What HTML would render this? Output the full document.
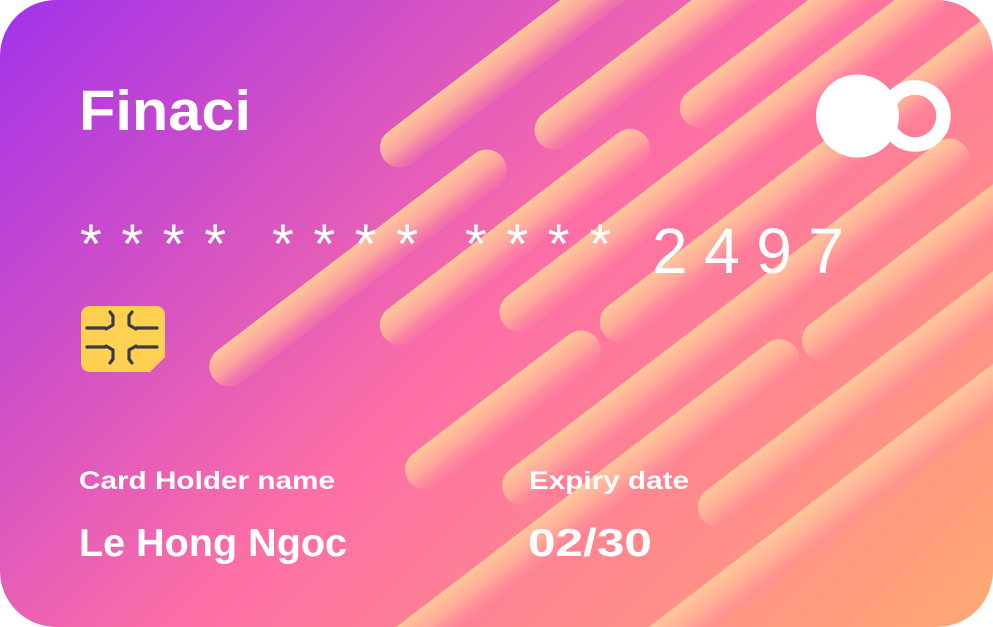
<!DOCTYPE html>
<html><head><meta charset="utf-8"><style>
html,body{margin:0;padding:0;background:#fff;width:993px;height:627px;overflow:hidden;}
svg{display:block;}
text{font-family:"Liberation Sans",sans-serif;fill:#fff;}
</style></head><body>
<svg width="993" height="627" viewBox="0 0 993 627" xmlns="http://www.w3.org/2000/svg">
<defs>
<linearGradient id="bg" x1="0" y1="0" x2="800" y2="800" gradientUnits="userSpaceOnUse">
<stop offset="0" stop-color="#a232ea"/>
<stop offset="0.28" stop-color="#d452c4"/>
<stop offset="0.5" stop-color="#fd6ea6"/>
<stop offset="0.75" stop-color="#ff8a8c"/>
<stop offset="1" stop-color="#ffa874"/>
</linearGradient>
<linearGradient id="pg" x1="0" y1="0" x2="0" y2="1">
<stop offset="0" stop-color="#ffc79a" stop-opacity="1"/>
<stop offset="0.5" stop-color="#ffb49a" stop-opacity="0.8"/>
<stop offset="1" stop-color="#ff86a0" stop-opacity="0.25"/>
</linearGradient>
<clipPath id="card"><rect x="0" y="0" width="993" height="627" rx="56"/></clipPath>
</defs>
<g clip-path="url(#card)">
<rect x="0" y="0" width="993" height="627" fill="url(#bg)"/>
<g fill="url(#pg)">
<rect x="349" y="36" width="342" height="40" rx="20" transform="rotate(-37.4 520 56)"/>
<rect x="505.5" y="24" width="323" height="40" rx="20" transform="rotate(-37.4 667 44)"/>
<rect x="656.5" y="19" width="267" height="40" rx="20" transform="rotate(-37.4 790 39)"/>
<rect x="447" y="137" width="550" height="40" rx="20" transform="rotate(-37.4 722 157)"/>
<rect x="176" y="248" width="364" height="40" rx="20" transform="rotate(-37.4 358 268)"/>
<rect x="350" y="217" width="330" height="40" rx="20" transform="rotate(-37.4 515 237)"/>
<rect x="548" y="149" width="544" height="40" rx="20" transform="rotate(-37.4 820 169)"/>
<rect x="447" y="302" width="578" height="40" rx="20" transform="rotate(-37.4 736 322)"/>
<rect x="385" y="390" width="236" height="40" rx="20" transform="rotate(-37.4 503 410)"/>
<rect x="331.5" y="484" width="517" height="40" rx="20" transform="rotate(-37.4 590 504)"/>
<rect x="653.5" y="356" width="471" height="40" rx="20" transform="rotate(-37.4 889 376)"/>
<rect x="771" y="229" width="340" height="40" rx="20" transform="rotate(-37.4 941 249)"/>
<rect x="517.5" y="486" width="645" height="42" rx="21" transform="rotate(-37.4 840 506)"/>
</g>
<circle cx="915" cy="116" r="28.5" fill="none" stroke="#fff" stroke-width="14.5"/>
<circle cx="857.5" cy="116" r="41.5" fill="#fff"/>
<text x="79" y="130" font-size="57" font-weight="bold" textLength="172" lengthAdjust="spacingAndGlyphs">Finaci</text>
<text x="80" y="263" font-size="56" textLength="146" lengthAdjust="spacing">****</text>
<text x="272" y="263" font-size="56" textLength="146" lengthAdjust="spacing">****</text>
<text x="465" y="263" font-size="56" textLength="146" lengthAdjust="spacing">****</text>
<text x="652" y="273" font-size="64" textLength="192" lengthAdjust="spacing">2497</text>
<path d="M91 306 H155 Q165 306 165 316 V357 L150 372 H91 Q81 372 81 362 V316 Q81 306 91 306 Z" fill="#ffd052"/>
<g fill="none" stroke="#3a3a48" stroke-width="3.2" stroke-linecap="round" stroke-linejoin="round">
<path d="M87 328 H105 M87 347 H105 M137 328 H157 M137 347 H157"/>
<path d="M110 312 L113 316 V325 L106 329 M106 346 L113 350 V359 L110 363"/>
<path d="M132 312 L129 316 V325 L136 329 M136 346 L129 350 V359 L132 363"/>
</g>
<text x="79" y="489" font-size="25" font-weight="bold" textLength="256" lengthAdjust="spacingAndGlyphs">Card Holder name</text>
<text x="79" y="556" font-size="39" font-weight="bold" textLength="268" lengthAdjust="spacingAndGlyphs">Le Hong Ngoc</text>
<text x="529" y="489" font-size="25" font-weight="bold" textLength="160" lengthAdjust="spacingAndGlyphs">Expiry date</text>
<text x="528" y="556" font-size="39" font-weight="bold" textLength="124" lengthAdjust="spacingAndGlyphs">02/30</text>
</g>
</svg>
</body></html>
